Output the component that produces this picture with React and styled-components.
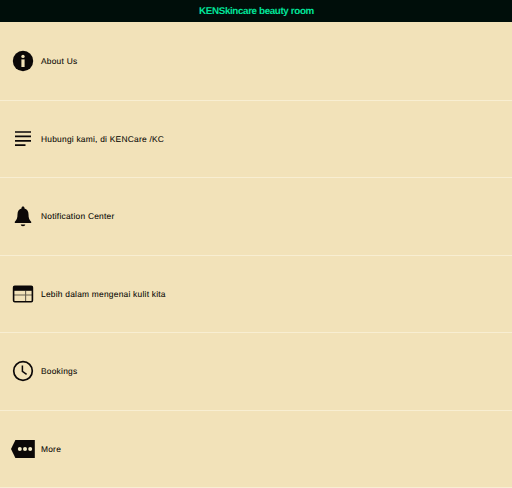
import React from "react";
import styled, { createGlobalStyle } from "styled-components";

const Global = createGlobalStyle`
  html, body { margin: 0; padding: 0; background: #f2e2b9; }
  body { font-family: "Liberation Sans", Arial, sans-serif; text-rendering: geometricPrecision; }
`;
const Page = styled.div`
  width: 512px;
  height: 488px;
  display: flex;
  flex-direction: column;
  overflow: hidden;
  background: #f2e2b9;
`;
const Header = styled.header`
  height: 22px;
  box-sizing: border-box;
  padding: 1px 0 0 1px;
  flex: none;
  background: #000e0a;
  color: #00e59a;
  font-size: 9.8px;
  letter-spacing: -0.36px;
  font-weight: 700;
  display: flex;
  align-items: center;
  justify-content: center;
`;
const List = styled.div`
  flex: 1;
  padding-top: 1px;
  display: grid;
  grid-template-rows: repeat(6, 1fr);
`;
const Row = styled.div`
  display: flex;
  align-items: center;
  padding-left: 11px;
  border-bottom: 1px solid #f8eed2;
`;
const IconSlot = styled.div`
  width: 24px;
  height: 24px;
  margin-right: 6px;
  flex: none;
  display: flex;
  align-items: center;
  justify-content: center;
  color: #0c0808;
`;
const Label = styled.span`
  font-size: 8.4px;
  letter-spacing: 0.24px;
  color: #0a0805;
  -webkit-text-stroke: 0.08px #0a0805;
`;

const Svg = ({ children }) => (
  <svg width="24" height="24" viewBox="0 0 24 24" fill="none">{children}</svg>
);

const icons = {
  info: (
    <Svg>
      <circle cx="12" cy="12" r="10.2" fill="currentColor" />
      <circle cx="12" cy="7.4" r="1.7" fill="#f2e2b9" />
      <rect x="10.4" y="10.4" width="3.2" height="7.6" fill="#f2e2b9" />
    </Svg>
  ),
  lines: (
    <Svg>
      <path d="M4 5h16M4 9.4h16M4 13.8h16M4 18.2h10.5" stroke="currentColor" strokeWidth="1.7" />
    </Svg>
  ),
  bell: (
    <Svg>
      <path d="M12 2.4c.9 0 1.5.6 1.5 1.5v.5c2.6.8 4 2.9 4 5.8 0 3.6.8 5.7 2.7 7.6v1.2H3.8v-1.2c1.9-1.9 2.7-4 2.7-7.6 0-2.9 1.4-5 4-5.8v-.5c0-.9.6-1.5 1.5-1.5z" fill="currentColor" />
      <path d="M9.8 20.6h4.4c0 .9-.9 1.6-2.2 1.6s-2.2-.7-2.2-1.6z" fill="currentColor" />
    </Svg>
  ),
  browser: (
    <Svg>
      <rect x="2.6" y="4.2" width="18.8" height="15.6" rx="1.2" stroke="currentColor" strokeWidth="1.6" />
      <rect x="2.6" y="4.2" width="18.8" height="4.6" fill="currentColor" />
      <path d="M3 13h18M14.6 8.8v10.4" stroke="currentColor" strokeWidth="1.1" opacity=".6" />
    </Svg>
  ),
  clock: (
    <Svg>
      <circle cx="12" cy="12" r="9.3" stroke="currentColor" strokeWidth="1.7" />
      <path d="M11.4 6.4v6l4.2 3" stroke="currentColor" strokeWidth="1.5" />
    </Svg>
  ),
  more: (
    <Svg>
      <path d="M4.4 3h19.4v18H4.4L0 12z" fill="currentColor" />
      <circle cx="8.8" cy="12" r="2" fill="#f6ecc9" />
      <circle cx="14" cy="12" r="2" fill="#f6ecc9" />
      <circle cx="19.2" cy="12" r="2" fill="#f6ecc9" />
    </Svg>
  ),
};

const items = [
  ["info", "About Us"],
  ["lines", "Hubungi kami, di KENCare /KC"],
  ["bell", "Notification Center"],
  ["browser", "Lebih dalam mengenai kulit kita"],
  ["clock", "Bookings"],
  ["more", "More"],
];

export default function App() {
  return (
    <Page>
      <Global />
      <Header>KENSkincare beauty room</Header>
      <List>
        {items.map(([icon, label]) => (
          <Row key={label}>
            <IconSlot>{icons[icon]}</IconSlot>
            <Label>{label}</Label>
          </Row>
        ))}
      </List>
    </Page>
  );
}
